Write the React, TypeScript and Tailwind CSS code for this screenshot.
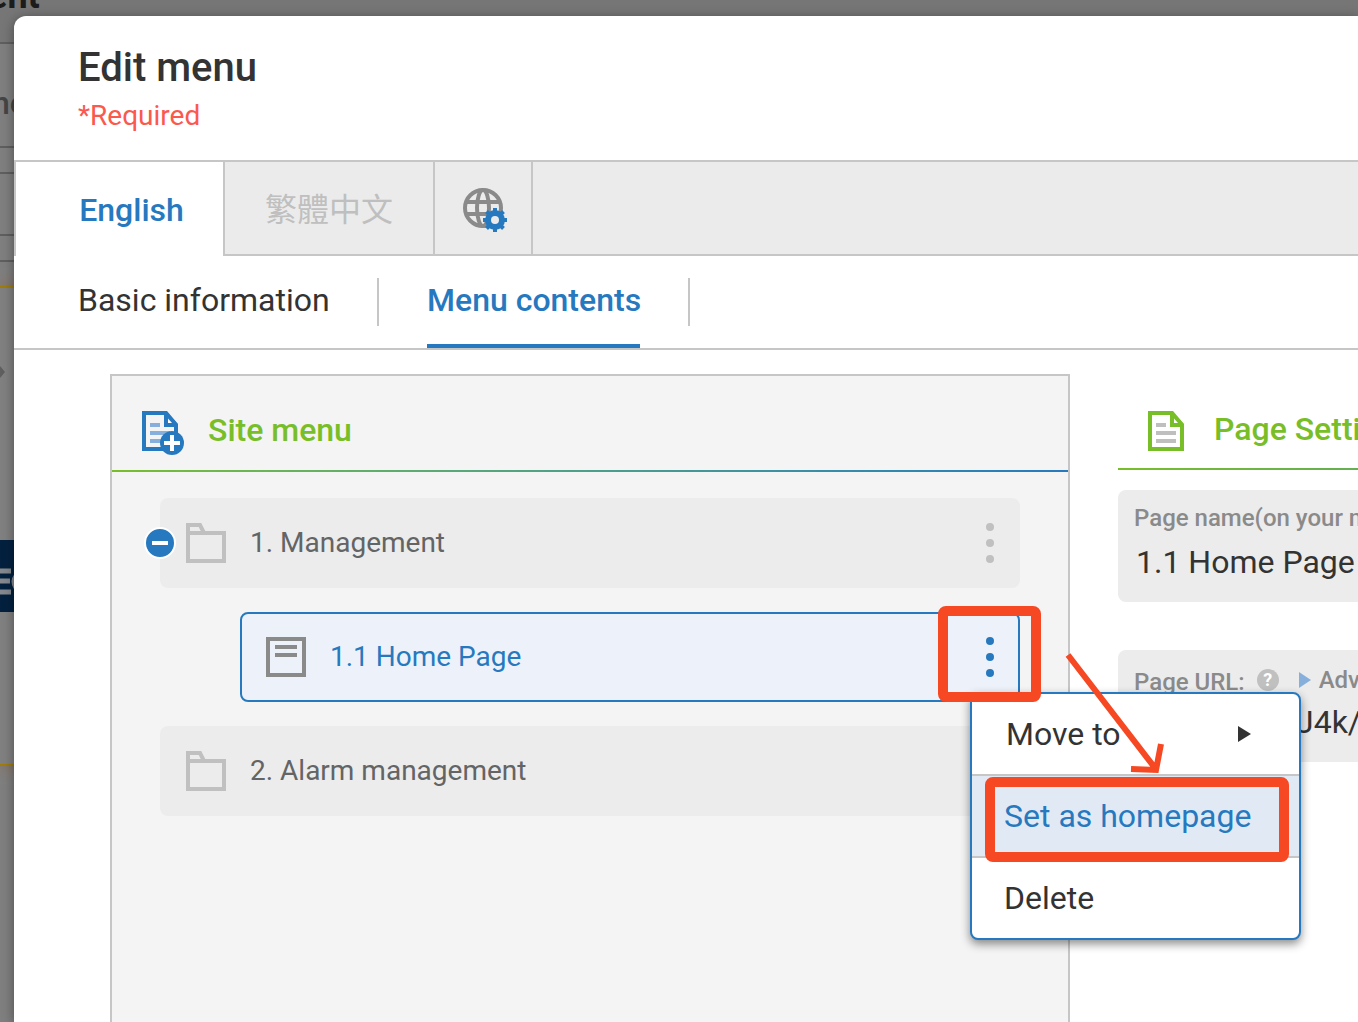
import React from "react";

function GlobeGearIcon() {
  return (
    <svg width="44" height="44" viewBox="0 0 44 44" fill="none" aria-hidden="true">
      <g stroke="#8a8a8a" strokeWidth="4">
        <circle cx="20" cy="20" r="18" />
        <ellipse cx="20" cy="20" rx="6" ry="18" />
        <path d="M3 14h34M3 26h34" />
      </g>
      <g fill="#2779bf">
        <circle cx="32" cy="32" r="10" />
        <rect x="30" y="20" width="4" height="24" />
        <rect x="20" y="30" width="24" height="4" />
        <rect x="30" y="20" width="4" height="24" transform="rotate(45 32 32)" />
        <rect x="30" y="20" width="4" height="24" transform="rotate(-45 32 32)" />
      </g>
      <circle cx="32" cy="32" r="4" fill="#ebebeb" />
    </svg>
  );
}

function DocumentIcon({ add = false }: { add?: boolean }) {
  const main = add ? "#2779bf" : "#78be28";
  return (
    <svg width="44" height="44" viewBox="0 0 44 44" fill="none" className="shrink-0" aria-hidden="true">
      <path d="M2 2h21l11 12v24H2z" stroke={main} strokeWidth="4" />
      <path d="M22 0h3l11 13v3H22z" fill={main} />
      <path d="M26 7.5V12h4z" fill="#fff" />
      <path d="M8 14h10M8 22h20M8 30h20" stroke={add ? "#86b0db" : "#bfbfbf"} strokeWidth="4" />
      {add && (
        <>
          <circle cx="30" cy="32" r="12" fill={main} />
          <path d="M30 24v16M22 32h16" stroke="#fff" strokeWidth="4" />
        </>
      )}
    </svg>
  );
}

function FolderIcon() {
  return (
    <svg width="40" height="40" viewBox="0 0 40 40" fill="none" aria-hidden="true">
      <path d="M2 38V2h12l4 8h20v28zM2 10h16" stroke="#c0c0c0" strokeWidth="4" />
    </svg>
  );
}

function PageIcon() {
  return (
    <svg width="40" height="40" viewBox="0 0 40 40" fill="none" aria-hidden="true">
      <path d="M2 2h36v36H2zM9 10h22M9 18h22" stroke="#8a8a8a" strokeWidth="4" />
    </svg>
  );
}

function MoreButton({ label, className }: { label: string; className: string }) {
  return (
    <button aria-label={label} className={`ml-auto ${className}`}>
      <svg width="8" height="40" viewBox="0 0 8 40" fill="currentColor" aria-hidden="true">
        <circle cx="4" cy="4" r="4" />
        <circle cx="4" cy="20" r="4" />
        <circle cx="4" cy="36" r="4" />
      </svg>
    </button>
  );
}

function Backdrop() {
  return (
    <div aria-hidden="true" className="col-start-1 row-start-1 flex flex-col overflow-hidden bg-[#7f7f7f]">
      <div className="flex h-11 items-start border-b-2 border-[#5f5f5f] bg-[#767676]">
        <span className="-mt-5 -ml-3 text-[36px] leading-8 font-bold text-[#1c1c1c]">ent</span>
      </div>
      <div className="flex h-[104px] items-center border-b-2 border-[#5f5f5f] pt-4 text-[32px] font-medium text-[#454545]">
        <span className="-ml-2">ne</span>
      </div>
      <div className="h-[26px] border-b-2 border-[#5f5f5f]" />
      <div className="h-[62px] border-b-2 border-[#5f5f5f]" />
      <div className="h-[26px] border-b-2 border-[#5f5f5f]" />
      <div className="h-6" />
      <div className="h-[480px] border-y-2 border-[#a07d08] bg-[#808080] shadow-[0_0_16px_#8a6d58]">
        <svg width="6" height="16" viewBox="0 0 6 16" className="mt-19">
          <path d="M0 2l5 6-5 6z" fill="#5f5f5f" />
        </svg>
        <div className="mt-40 flex h-[72px] items-center bg-[#03213f]">
          <svg width="14" height="28" viewBox="0 0 14 28" fill="none" className="mt-3">
            <path d="M0 3h11M0 13h10M0 24h11" stroke="#85898e" strokeWidth="5" />
            <path d="M15 8q-4 5 0 12" stroke="#85898e" strokeWidth="3" />
          </svg>
        </div>
      </div>
    </div>
  );
}

function ContextMenu() {
  return (
    <div
      role="menu"
      className="absolute top-[78px] -right-[283px] z-10 w-[331px] rounded-lg border-2 border-[#2779bf] bg-white text-[32px] text-[#333] shadow-[0_4px_10px_rgba(0,0,0,0.45)]"
    >
      <button role="menuitem" className="flex h-20 w-full items-center justify-between pr-12 pl-[34px] text-left">
        Move to
        <svg width="13" height="16" viewBox="0 0 13 16" fill="#333" aria-hidden="true">
          <path d="M0 0l13 8-13 8z" />
        </svg>
      </button>
      <div className="relative border-y-2 border-[#c6c6c6] bg-[#e1eaf4]">
        <button role="menuitem" className="flex h-20 w-full items-center pl-8 text-[#2779bf]">
          Set as homepage
        </button>
        <div className="pointer-events-none absolute top-px right-[10px] -bottom-[6px] left-[13px] rounded-lg border-10 border-[#f54823]" />
        <svg
          width="104"
          height="124"
          viewBox="0 0 104 124"
          fill="none"
          className="pointer-events-none absolute -top-[124px] left-[93px]"
          aria-hidden="true"
        >
          <path d="M3 3l87 113M66 117l25 1 5-26" stroke="#f54823" strokeWidth="6" />
        </svg>
      </div>
      <button role="menuitem" className="flex h-20 w-full items-center pl-8">
        Delete
      </button>
    </div>
  );
}

function SiteMenu() {
  return (
    <section className="min-w-0 flex-1 border-2 border-b-0 border-[#c6c6c6] bg-[#f4f4f4]">
      <header className="flex h-[94px] items-center gap-[22px] pt-5 pl-[30px]">
        <DocumentIcon add />
        <h2 className="-mt-1.5 text-[32px] font-medium text-[#78be28]">Site menu</h2>
      </header>
      <div className="h-0.5 bg-linear-to-r from-[#78be28] to-[#2779bf]" />
      <ul className="flex flex-col gap-6 px-12 pt-[26px] text-[28px] text-[#636466]">
        <li className="relative flex h-[90px] items-center gap-6 rounded-lg bg-[#ececec] px-[26px]">
          <button
            aria-label="Collapse"
            className="absolute -left-4 flex size-8 items-center justify-center rounded-full border-2 border-white bg-[#2779bf]"
          >
            <span className="h-1 w-4 bg-white" />
          </button>
          <FolderIcon />
          <span>1. Management</span>
          <MoreButton label="Management options" className="text-[#c0c0c0]" />
        </li>
        <li className="relative ml-20 flex h-[90px] items-center gap-6 rounded-lg border-2 border-[#2779bf] bg-[#edf2fa] px-6">
          <PageIcon />
          <a href="#home-page" className="text-[#2779bf]">
            1.1 Home Page
          </a>
          <MoreButton label="Home Page options" className="text-[#2779bf]" />
          <ContextMenu />
          <div className="pointer-events-none absolute -top-2 -right-[23px] z-20 h-24 w-[103px] rounded-lg border-10 border-[#f54823]" />
        </li>
        <li className="flex h-[90px] items-center gap-6 rounded-lg bg-[#ececec] px-[26px]">
          <FolderIcon />
          <span>2. Alarm management</span>
          <MoreButton label="Alarm management options" className="text-[#c0c0c0]" />
        </li>
      </ul>
    </section>
  );
}

function PageSettings() {
  return (
    <section className="w-60 shrink-0 overflow-hidden whitespace-nowrap">
      <header className="flex h-[94px] items-center gap-[22px] pt-6 pl-[30px]">
        <DocumentIcon />
        <h2 className="-mt-2 text-[32px] font-medium text-[#78be28]">Page Settings</h2>
      </header>
      <div className="h-0.5 bg-linear-to-r from-[#78be28] to-[#64af50]" />
      <div className="mt-5 h-28 rounded-l-lg bg-[#ececec] pt-3 pl-4">
        <label htmlFor="page-name" className="block text-2xl font-medium text-[#8a8a8a]">
          Page name(on your menu)
        </label>
        <input
          id="page-name"
          defaultValue="1.1 Home Page"
          className="mt-1 h-12 w-full bg-transparent pl-0.5 text-[32px] text-[#333] outline-none"
        />
      </div>
      <div className="mt-12 h-28 rounded-l-lg bg-[#ececec] pt-3 pl-4">
        <div className="flex h-9 items-center text-2xl font-medium text-[#8a8a8a]">
          <label htmlFor="page-url" className="pt-1">
            Page URL:
          </label>
          <button
            aria-label="Help"
            className="ml-3 flex size-[22px] shrink-0 items-center justify-center rounded-full bg-[#c0c0c0] text-lg font-bold text-white"
          >
            ?
          </button>
          <button className="ml-5 flex items-center gap-2">
            <svg width="12" height="16" viewBox="0 0 12 16" fill="#86b0db" aria-hidden="true">
              <path d="M0 0l12 8-12 8z" />
            </svg>
            Advanced
          </button>
        </div>
        <input
          id="page-url"
          defaultValue="J4k/"
          className="h-12 w-full bg-transparent pl-[162px] text-[32px] text-[#333] outline-none"
        />
      </div>
    </section>
  );
}

export default function App() {
  return (
    <div className="grid h-screen grid-cols-1 grid-rows-1 overflow-hidden font-['Roboto','Noto_Sans_CJK_TC',sans-serif]">
      <Backdrop />
      <main className="z-10 col-start-1 row-start-1 mt-4 ml-3.5 flex flex-col overflow-hidden rounded-tl-xl bg-white text-[#333] shadow-[0_2px_12px_rgba(0,0,0,0.4)]">
        <header className="h-36 shrink-0 pt-6 pl-16">
          <h1 className="text-[40px] leading-14 font-medium">Edit menu</h1>
          <p className="text-[28px] leading-10 text-[#fb584e]">*Required</p>
        </header>
        <nav aria-label="Language" className="flex h-24 shrink-0 border-t-2 border-[#c6c6c6] text-[32px]">
          <button className="w-[211px] border-x-2 border-[#c6c6c6] pt-0.5 pl-6 font-medium text-[#2779bf]">
            English
          </button>
          <button className="w-[210px] border-r-2 border-b-2 border-[#c6c6c6] bg-[#ebebeb] pt-1 text-[#bfbfbf]">
            繁體中文
          </button>
          <button
            aria-label="Language settings"
            className="flex w-[98px] items-center justify-center border-r-2 border-b-2 border-[#c6c6c6] bg-[#ebebeb] pt-1 pl-1"
          >
            <GlobeGearIcon />
          </button>
          <div className="flex-1 border-b-2 border-[#c6c6c6] bg-[#ebebeb]" />
        </nav>
        <nav aria-label="Sections" className="flex h-[94px] shrink-0 border-b-2 border-[#c6c6c6] pl-16 text-[32px]">
          <button className="w-[251px] pb-1 text-left whitespace-nowrap">Basic information</button>
          <div className="mt-[22px] ml-12 h-12 w-0.5 bg-[#c6c6c6]" />
          <button className="ml-12 w-[213px] border-b-4 border-[#2779bf] font-medium whitespace-nowrap text-[#2779bf]">
            Menu contents
          </button>
          <div className="mt-[22px] ml-12 h-12 w-0.5 bg-[#c6c6c6]" />
        </nav>
        <div className="flex flex-1 gap-12 pt-6 pl-24">
          <SiteMenu />
          <PageSettings />
        </div>
      </main>
    </div>
  );
}
